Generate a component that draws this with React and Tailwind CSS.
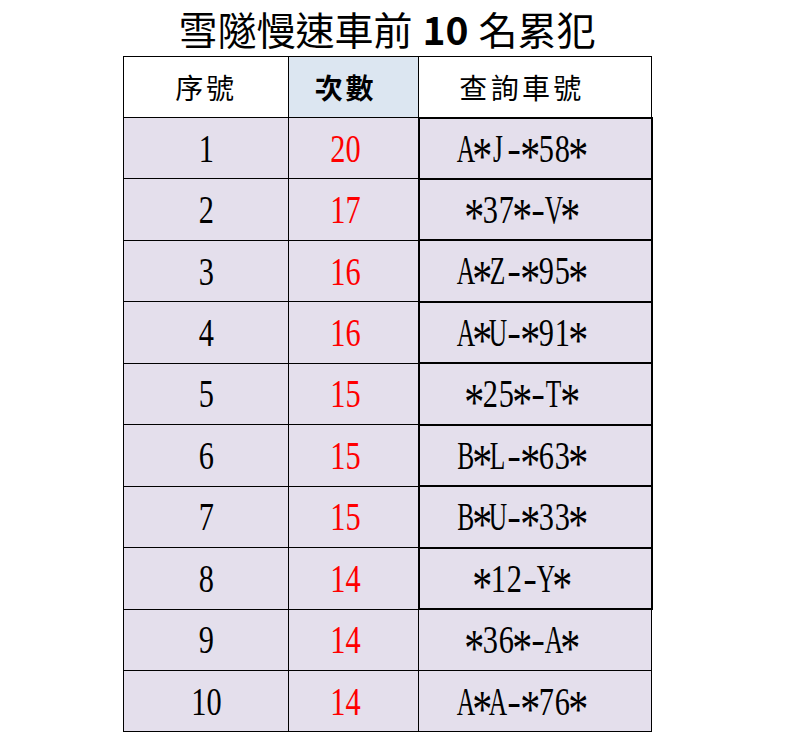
import React from 'react';

const rows = [
    [1, 20, 'A*J-*58*'],
    [2, 17, '*37*-V*'],
    [3, 16, 'A*Z-*95*'],
    [4, 16, 'A*U-*91*'],
    [5, 15, '*25*-T*'],
    [6, 15, 'B*L-*63*'],
    [7, 15, 'B*U-*33*'],
    [8, 14, '*12-Y*'],
    [9, 14, '*36*-A*'],
    [10, 14, 'A*A-*76*'],
];

const serif = { fontFamily: '"Liberation Serif", serif' };
const cjk = { fontFamily: '"Noto Sans CJK TC", sans-serif' };

const Narrow = ({ children }) => (
    <span className="inline-block whitespace-nowrap scale-x-[0.74] text-[41px] leading-none" style={serif}>
        {children}
    </span>
);

// half-width cells, like the original Ming font: every char gets 16px
const Plate = ({ text }) => (
    <span className="relative top-[-4px] inline-flex items-baseline whitespace-nowrap text-[41px] leading-none" style={serif}>
        {text.split('').map((ch, i) => (
            <span key={i} className="inline-flex items-baseline w-[16px] justify-center">
                {ch === '*' ? (
                    <span className="relative top-[0.23em] inline-block scale-x-[0.75] text-[1.3em] leading-none">*</span>
                ) : ch === '-' ? (
                    <span className="inline-block">-</span>
                ) : /[A-Z]/.test(ch) ? (
                    <span className="inline-block scale-x-[0.62]">{ch}</span>
                ) : (
                    <span className="inline-block scale-x-[0.74]">{ch}</span>
                )}
            </span>
        ))}
    </span>
);

const App = () => {
    return (
        <div className="w-[798px] h-[744px] bg-white">
            <div className="ml-[123px] w-[528px]">
                <div className="h-[56px] flex items-center justify-center text-[39px] text-black" style={cjk}>
                    <span>雪隧慢速車前</span>
                    <span className="font-bold mx-[10px]">10</span>
                    <span>名累犯</span>
                </div>
                <table className="w-[528px] table-fixed border-collapse">
                    <colgroup>
                        <col className="w-[165px]" />
                        <col className="w-[130px]" />
                        <col className="w-[233px]" />
                    </colgroup>
                    <thead>
                        <tr className="h-[61px]">
                            <th className="border border-black bg-white font-normal text-[28px] tracking-[0.1em]" style={cjk}>序號</th>
                            <th className="border border-black bg-[#dce6f1] font-bold text-[28px] tracking-[0.1em] pr-[16px]" style={cjk}>次數</th>
                            <th className="border border-black bg-white font-normal text-[28px] tracking-[0.12em] pr-[26px]" style={cjk}>查詢車號</th>
                        </tr>
                    </thead>
                    <tbody>
                        {rows.map(([n, count, plate]) => (
                            <tr key={n} className="h-[61.45px] bg-[#e4dfec]">
                                <td className="border border-black text-center text-black">
                                    <Narrow>{n}</Narrow>
                                </td>
                                <td className="border border-black text-center text-[#ff0000] pr-[16px]">
                                    <Narrow>{count}</Narrow>
                                </td>
                                <td className={`text-center text-black border-black pr-[26px] ${n <= 8 ? 'border-2' : 'border'}`}>
                                    <Plate text={plate} />
                                </td>
                            </tr>
                        ))}
                    </tbody>
                </table>
            </div>
        </div>
    );
};

export default App;
